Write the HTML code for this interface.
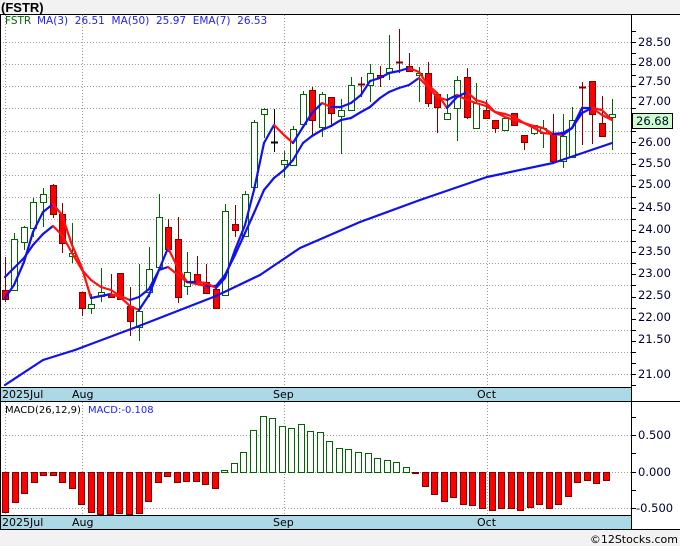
<!DOCTYPE html>
<html><head><meta charset="utf-8"><style>
html,body{margin:0;padding:0;background:#f2f2f2;width:680px;height:546px;overflow:hidden}
svg{display:block;font-family:"DejaVu Sans","Liberation Sans",sans-serif}
</style></head><body>
<svg id="s" width="680" height="546" xmlns="http://www.w3.org/2000/svg">
<rect x="0" y="0" width="680" height="546" fill="#f2f2f2"/>
<rect x="0" y="14" width="680" height="516" fill="#fff"/>
<text x="1" y="12" font-size="13" font-weight="bold" fill="#000" font-family="Liberation Sans, sans-serif">(FSTR)</text>
<g id="grid" stroke="#999" stroke-dasharray="1,2" stroke-width="1"></g>
<!-- date bands -->
<rect x="0" y="387" width="631" height="14" fill="#add8e6"/>
<rect x="0" y="515" width="631" height="14" fill="#add8e6"/>
<g font-size="11" fill="#000">
<text x="2" y="398">2025Jul</text><text x="72" y="398">Aug</text><text x="273" y="398">Sep</text><text x="477" y="398">Oct</text>
<text x="2" y="526">2025Jul</text><text x="72" y="526">Aug</text><text x="273" y="526">Sep</text><text x="477" y="526">Oct</text>
</g>
<g id="chart"></g>
<g stroke="#000" stroke-width="1">
<line x1="0" y1="14.5" x2="680" y2="14.5"/>
<line x1="0" y1="387.5" x2="631" y2="387.5"/>
<line x1="0" y1="401.5" x2="680" y2="401.5"/>
<line x1="0" y1="515.5" x2="631" y2="515.5"/>
<line x1="0" y1="529.5" x2="680" y2="529.5"/>
<line x1="631.5" y1="14" x2="631.5" y2="530"/>
<line x1="0.5" y1="14" x2="0.5" y2="530"/>
</g>
<g id="ticks" stroke="#000"></g>
<g font-size="11.5" fill="#000033">
<text x="638" y="46">28.50</text><text x="638" y="66">28.00</text><text x="638" y="85">27.50</text><text x="638" y="105">27.00</text>
<text x="638" y="146">26.00</text><text x="638" y="167">25.50</text><text x="638" y="188">25.00</text><text x="638" y="211">24.50</text>
<text x="638" y="233">24.00</text><text x="638" y="255">23.50</text><text x="638" y="277">23.00</text><text x="638" y="299">22.50</text>
<text x="638" y="321">22.00</text><text x="638" y="343">21.50</text><text x="638" y="378">21.00</text>
<text x="638" y="439">0.500</text><text x="638" y="476">0.000</text><text x="636" y="512">-0.500</text>
</g>
<rect x="632.5" y="113.5" width="40" height="15" fill="#ccffcc" stroke="#000"/>
<text x="636" y="125" font-size="11.5" fill="#000033">26.68</text>
<text x="5" y="24" font-size="10.5" fill="#006400">FSTR</text>
<text x="37" y="24" font-size="10.5" fill="#2222ee" xml:space="preserve">MA(3)  26.51  MA(50)  25.97  EMA(7)  26.53</text>
<text x="5" y="413" font-size="10" fill="#000">MACD(26,12,9)</text>
<text x="88" y="413" font-size="10" fill="#2222ee">MACD:-0.108</text>
<text x="678" y="543" font-size="11" fill="#000" text-anchor="end">©12Stocks.com</text>
</svg>
<script>
var NS="http://www.w3.org/2000/svg";
function el(p,t,a){var e=document.createElementNS(NS,t);for(var k in a)e.setAttribute(k,a[k]);p.appendChild(e);return e;}
var g=document.getElementById('grid'),c=document.getElementById('chart'),tk=document.getElementById('ticks');
function py(p){return 42+(28.5-p)*44.27;}
for(var p=21;p<=28.51;p+=0.5){var y=Math.round(py(p))+.5;el(g,'line',{x1:0,y1:y,x2:631,y2:y});}
for(var p=20.75;p<=28.8;p+=0.25){var y=Math.round(py(p))+.5;if(y>16&&y<386)el(tk,'line',{x1:631,y1:y,x2:636,y2:y});}
[435.5,472.5,508.5].forEach(function(y){el(g,'line',{x1:0,y1:y,x2:631,y2:y});el(tk,'line',{x1:631,y1:y,x2:636,y2:y});});
[417,453,490].forEach(function(y){el(tk,'line',{x1:631,y1:y+.5,x2:636,y2:y+.5});});
[5.5,82.5,284.5,487.5].forEach(function(x){el(g,'line',{x1:x,y1:15,x2:x,y2:387});el(g,'line',{x1:x,y1:402,x2:x,y2:515});});
var C=[[5,290,299,257,302,'r'],[14,239,290,233,290,'g'],[24,227,242,226,250,'g'],[33,202,228,198,237,'g'],[43,194,202,188,227,'g'],[53,185,214,184,218,'r'],[62,214,243,203,253,'r'],[72,253,256,223,263,'g'],[82,292,308,292,316,'r'],[91,304,308,294,314,'g'],[101,292,296,268,302,'g'],[111,294,297,274,298,'r'],[120,273,299,273,299,'r'],[130,306,321,287,336,'r'],[139,311,327,264,341,'g'],[149,269,292,247,297,'g'],[159,217,267,194,267,'g'],[168,227,249,219,252,'r'],[178,239,297,217,303,'r'],[187,272,286,252,295,'g'],[197,274,281,256,283,'r'],[206,282,293,264,293,'r'],[216,289,308,289,308,'r'],[225,211,295,204,295,'g'],[235,224,230,205,237,'r'],[245,194,236,191,236,'g'],[254,122,187,120,187,'g'],[264,109,114,108,138,'g'],[274,142,142,109,152,'k'],[284,160,164,151,178,'g'],[293,129,165,126,165,'g'],[303,94,124,91,124,'g'],[312,90,120,87,136,'r'],[322,94,127,92,137,'g'],[331,97,113,97,127,'r'],[341,110,116,99,154,'g'],[351,85,110,77,110,'g'],[361,84,84,77,97,'d'],[370,73,85,64,102,'g'],[380,75,77,66,87,'r'],[389,68,72,35,80,'g'],[399,62,62,29,73,'d'],[409,66,71,53,72,'r'],[419,73,73,67,102,'g'],[428,73,103,62,107,'r'],[437,94,107,94,133,'r'],[447,113,119,94,119,'g'],[457,80,108,76,141,'g'],[467,77,117,68,119,'r'],[476,103,128,83,128,'g'],[486,110,118,100,118,'r'],[495,120,128,120,133,'r'],[505,118,130,118,130,'g'],[514,113,125,113,125,'r'],[524,135,142,135,150,'r'],[534,125,133,125,135,'g'],[543,128,133,120,148,'g'],[553,134,161,114,162,'r'],[563,136,161,114,168,'g'],[572,120,157,107,157,'g'],[582,87,87,82,145,'d'],[592,81,114,81,144,'r'],[602,123,136,96,137,'r'],[612,114,117,99,150,'g']];
function line(pts,col){for(var i=1;i<pts.length;i++){var a=pts[i-1],b=pts[i];var cl=col||(b[1]>a[1]+0.5?'#ff1111':'#1111ee');el(c,'line',{x1:a[0],y1:a[1],x2:b[0],y2:b[1],stroke:cl,'stroke-width':2.2,'stroke-linecap':'round'});}}
var A=[[5,298],[14,285],[24,262],[33,232],[43,212],[53,204],[62,215],[72,245],[82,268],[91,298],[101,296],[111,294],[120,297],[130,306],[139,310],[149,295],[159,270],[168,248],[178,268],[187,282],[197,282],[206,283],[216,288],[225,278],[235,250],[245,225],[254,190],[264,143],[274,125],[284,135],[293,143],[303,127],[312,113],[322,103],[331,107],[341,107],[351,103],[361,95],[370,81],[380,78],[389,73],[399,71],[409,68],[419,72],[428,85],[437,93],[447,108],[457,97],[467,92],[476,100],[486,103],[495,112],[505,117],[514,120],[524,123],[534,128],[543,133],[553,134],[563,133],[572,128],[582,113],[592,108],[602,110],[612,120]];
var B=[[5,277],[14,268],[24,258],[33,245],[43,234],[53,226],[62,235],[72,253],[82,270],[91,280],[101,287],[111,290],[120,296],[130,300],[139,297],[149,289],[159,270],[168,267],[178,275],[187,282],[197,284],[206,286],[216,286],[225,275],[235,255],[245,233],[254,213],[264,190],[274,178],[284,170],[293,160],[303,143],[312,136],[322,130],[331,126],[341,120],[351,118],[361,112],[370,107],[380,98],[389,92],[399,88],[409,85],[419,78],[428,87],[437,97],[447,100],[457,95],[467,100],[476,103],[486,106],[495,112],[505,114],[514,117],[524,123],[534,126],[543,128],[553,134],[563,135],[572,128],[582,108],[592,108],[602,115],[612,120]];
var M=[[5,385],[43,360],[75,350],[139,326],[216,296],[260,275],[300,248],[360,222],[420,200],[487,177],[553,163],[612,143]];
C.forEach(function(d){var x=d[0],col=d[5];var wc=col=='g'?'#006400':col=='k'?'#000':'#800000';
el(c,'line',{x1:x+.5,y1:d[3],x2:x+.5,y2:d[4],stroke:wc,'stroke-width':1});
if(col=='d'||col=='k'){el(c,'line',{x1:x-3,y1:d[1]+.5,x2:x+4,y2:d[1]+.5,stroke:wc,'stroke-width':2});}
else el(c,'rect',{x:x-2.5,y:d[1]+.5,width:6,height:Math.max(2,d[2]-d[1]),fill:col=='g'?'#fff':'#ff0000',stroke:col=='g'?'#006400':'#800000','stroke-width':1});});
line(M,'#1111ee');line(B);line(A);
var H=[512,502,493,482,475,475,482,488,504,512,514,514,513,514,513,501,482,476,482,481,481,484,488,470,463,452,430,416,418,426,428,424,431,432,441,448,449,452,453,458,460,462,467,473,486,494,501,497,504,505,508,510,508,508,510,507,504,508,504,496,482,480,483,480];
H.forEach(function(y,i){var x=Math.round(5+9.54*i);var green=i>=23&&i<43;
if(green)el(c,'rect',{x:x-2.5,y:y+.5,width:6,height:472-y,fill:'#fff',stroke:'#006400'});
else el(c,'rect',{x:x-2.5,y:472.5,width:6,height:Math.max(1,y-472),fill:'#ff0000',stroke:'#800000'});});
</script>
</body></html>
